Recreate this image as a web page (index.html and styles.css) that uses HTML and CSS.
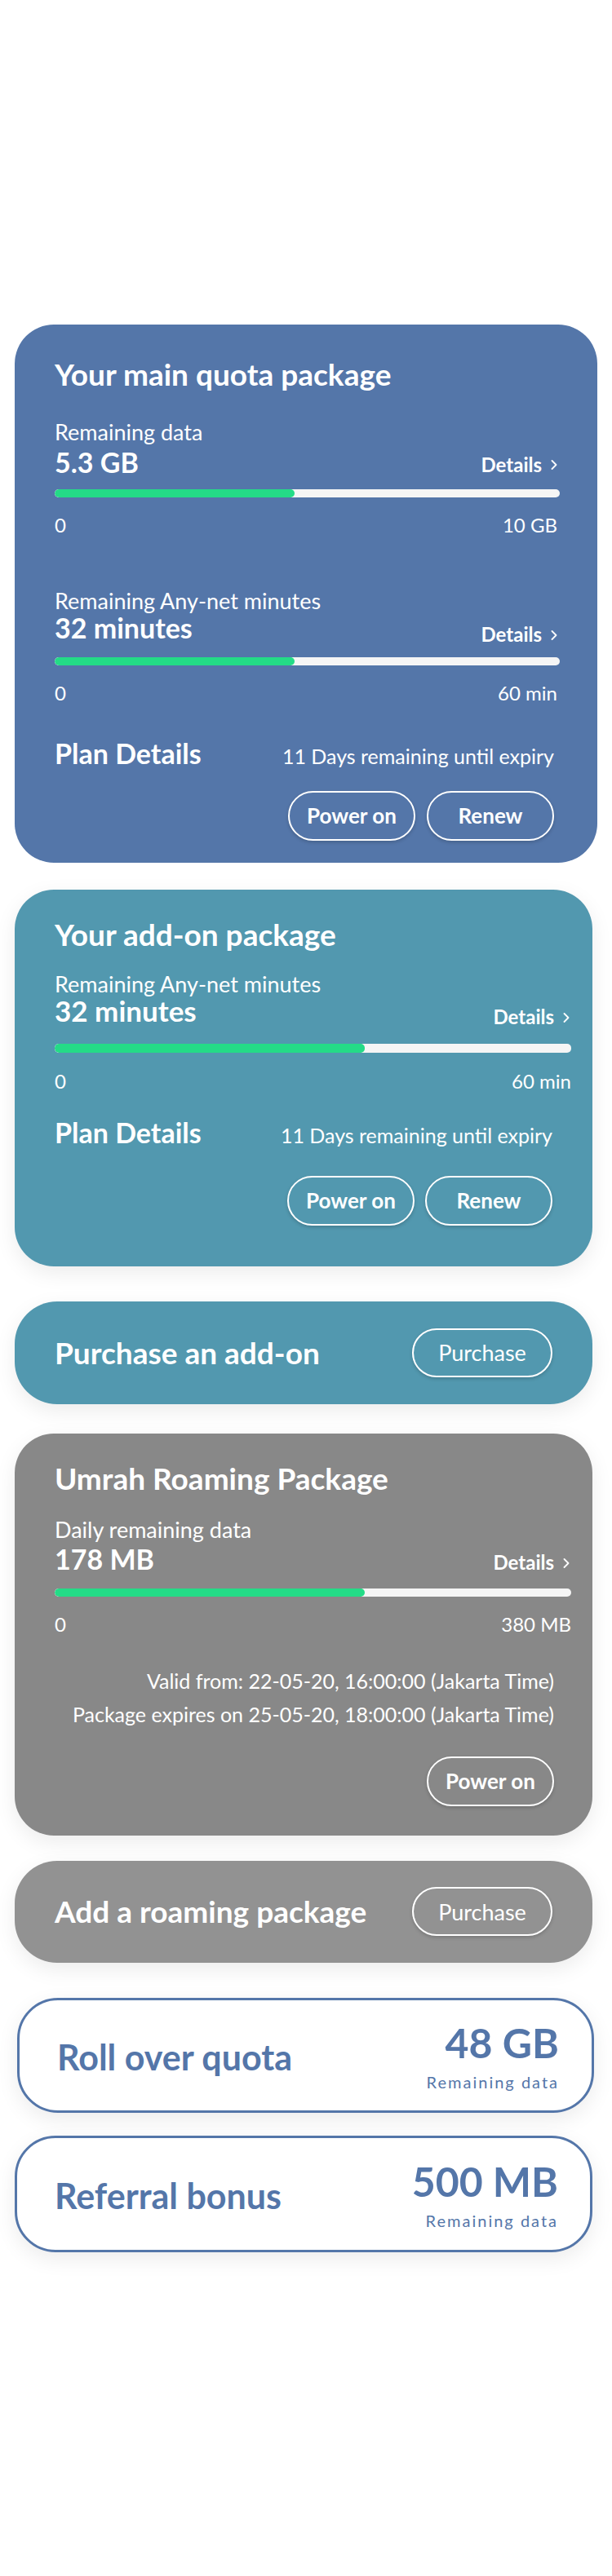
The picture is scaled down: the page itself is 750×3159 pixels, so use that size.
FILE: index.html
```html
<!DOCTYPE html>
<html lang="en">
<head>
<meta charset="utf-8">
<title>Quota</title>
<link rel="stylesheet" href="styles.css">
</head>
<body>
<main class="page">

  <section class="card card--main">
    <h2 class="card-title">Your main quota package</h2>
    <div class="usage usage--a">
      <div class="usage-label">Remaining data</div>
      <div class="usage-row">
        <div class="usage-value">5.3 GB</div>
        <a class="details">Details <svg class="chev" viewBox="0 0 8 12" width="8" height="12"><polyline points="1.5,1 6.5,6 1.5,11" fill="none" stroke="#fff" stroke-width="1.8" stroke-linecap="round" stroke-linejoin="round"/></svg></a>
      </div>
      <div class="bar"><div class="bar-fill" style="width:47.5%"></div></div>
      <div class="ticks"><span>0</span><span>10 GB</span></div>
    </div>
    <div class="usage usage--b">
      <div class="usage-label">Remaining Any-net minutes</div>
      <div class="usage-row">
        <div class="usage-value">32 minutes</div>
        <a class="details">Details <svg class="chev" viewBox="0 0 8 12" width="8" height="12"><polyline points="1.5,1 6.5,6 1.5,11" fill="none" stroke="#fff" stroke-width="1.8" stroke-linecap="round" stroke-linejoin="round"/></svg></a>
      </div>
      <div class="bar"><div class="bar-fill" style="width:47.5%"></div></div>
      <div class="ticks"><span>0</span><span>60 min</span></div>
    </div>
    <div class="plan-row">
      <span class="plan-title">Plan Details</span>
      <span class="plan-expiry">11 Days remaining until expiry</span>
    </div>
    <div class="actions">
      <button class="pill">Power on</button>
      <button class="pill">Renew</button>
    </div>
  </section>

  <section class="card card--addon">
    <h2 class="card-title">Your add-on package</h2>
    <div class="usage">
      <div class="usage-label">Remaining Any-net minutes</div>
      <div class="usage-row">
        <div class="usage-value">32 minutes</div>
        <a class="details">Details <svg class="chev" viewBox="0 0 8 12" width="8" height="12"><polyline points="1.5,1 6.5,6 1.5,11" fill="none" stroke="#fff" stroke-width="1.8" stroke-linecap="round" stroke-linejoin="round"/></svg></a>
      </div>
      <div class="bar"><div class="bar-fill" style="width:60%"></div></div>
      <div class="ticks"><span>0</span><span>60 min</span></div>
    </div>
    <div class="plan-row">
      <span class="plan-title">Plan Details</span>
      <span class="plan-expiry">11 Days remaining until expiry</span>
    </div>
    <div class="actions">
      <button class="pill">Power on</button>
      <button class="pill">Renew</button>
    </div>
  </section>

  <section class="strip strip--teal">
    <h2 class="strip-title">Purchase an add-on</h2>
    <button class="pill pill--buy">Purchase</button>
  </section>

  <section class="card card--roam">
    <h2 class="card-title">Umrah Roaming Package</h2>
    <div class="usage">
      <div class="usage-label">Daily remaining data</div>
      <div class="usage-row">
        <div class="usage-value">178 MB</div>
        <a class="details">Details <svg class="chev" viewBox="0 0 8 12" width="8" height="12"><polyline points="1.5,1 6.5,6 1.5,11" fill="none" stroke="#fff" stroke-width="1.8" stroke-linecap="round" stroke-linejoin="round"/></svg></a>
      </div>
      <div class="bar"><div class="bar-fill" style="width:60%"></div></div>
      <div class="ticks"><span>0</span><span>380 MB</span></div>
    </div>
    <div class="validity">
      <p>Valid from: 22-05-20, 16:00:00 (Jakarta Time)</p>
      <p>Package expires on 25-05-20, 18:00:00 (Jakarta Time)</p>
    </div>
    <div class="actions">
      <button class="pill">Power on</button>
    </div>
  </section>

  <section class="strip strip--grey">
    <h2 class="strip-title">Add a roaming package</h2>
    <button class="pill pill--buy">Purchase</button>
  </section>

  <section class="outline outline--roll">
    <h2 class="outline-title">Roll over quota</h2>
    <div class="outline-amount">
      <div class="amount-value">48 GB</div>
      <div class="amount-label">Remaining data</div>
    </div>
  </section>

  <section class="outline outline--ref">
    <h2 class="outline-title">Referral bonus</h2>
    <div class="outline-amount">
      <div class="amount-value">500 MB</div>
      <div class="amount-label">Remaining data</div>
    </div>
  </section>

</main>
</body>
</html>
```

FILE: styles.css
```css
* { box-sizing: border-box; }

html, body {
  margin: 0;
  padding: 0;
  background: #ffffff;
}

body {
  font-family: Lato, "Liberation Sans", sans-serif;
  color: #ffffff;
  line-height: 1.2;
}

.page {
  display: flex;
  flex-direction: column;
  align-items: flex-start;
  padding: 398px 0 395px 0;
}

h2, p { margin: 0; }

/* ---------- big cards ---------- */
.card {
  margin-left: 18px;
  width: 708px;
  border-radius: 48px;
  display: flex;
  flex-direction: column;
  box-shadow: 0 8px 26px rgba(0, 0, 0, 0.08);
}

.card-title {
  font-size: 37px;
  font-weight: 700;
  line-height: 1.2;
}

.usage-label {
  font-size: 27px;
  font-weight: 400;
  line-height: 1;
}

.usage-row {
  display: flex;
  justify-content: space-between;
  align-items: flex-end;
}

.usage-value {
  font-size: 34px;
  font-weight: 700;
  line-height: 1;
}

.details {
  font-size: 24px;
  font-weight: 700;
  line-height: 1.2;
  display: flex;
  align-items: center;
  gap: 11px;
  margin-bottom: 0;
}

.chev { display: block; }

.bar {
  height: 10px;
  border-radius: 5px;
  background: #f5f5f5;
  overflow: hidden;
}

.bar-fill {
  height: 100%;
  background: #24db87;
  border-radius: 5px;
}

.ticks {
  display: flex;
  justify-content: space-between;
  font-size: 24px;
  font-weight: 400;
  line-height: 1.2;
}

.plan-row {
  display: flex;
  justify-content: space-between;
  align-items: baseline;
}

.plan-title {
  font-size: 34px;
  font-weight: 700;
  line-height: 1.2;
}

.plan-expiry {
  font-size: 25px;
  font-weight: 400;
  line-height: 1.2;
}

.actions {
  display: flex;
  justify-content: flex-end;
  gap: 14px;
}

.pill {
  font-family: Lato, "Liberation Sans", sans-serif;
  color: #ffffff;
  background: transparent;
  border: 2px solid #ffffff;
  border-radius: 31px;
  width: 156px;
  height: 61px;
  font-size: 26px;
  font-weight: 700;
  padding: 0;
  box-shadow: 0 2px 4px rgba(0, 0, 0, 0.18);
}

.pill--buy {
  width: 172px;
  height: 60px;
  font-size: 27px;
  font-weight: 400;
}

/* main card */
.card--main {
  width: 714px;
  background: #5476a9;
  padding: 39px 46px 27px 49px;
  box-shadow: none;
}
.card--main .usage--a { margin-top: 35px; }
.card--main .usage--b { margin-top: 64px; }
.card--main .usage--a .usage-value { margin-top: 7px; }
.card--main .usage--b .usage-value { margin-top: 3px; }
.card--main .details { margin-right: 3px; }
.card--main .usage--b .details { margin-bottom: -6px; }
.card--main .usage--a .bar { margin-top: 16px; }
.card--main .usage--b .bar { margin-top: 19px; }
.card--main .ticks { margin-top: 20px; padding-right: 3px; }
.card--main .plan-row { margin-top: 39px; margin-right: 7px; }
.card--main .actions { margin-top: 25px; margin-right: 7px; }

/* add-on card */
.card--addon {
  margin-top: 33px;
  background: #5298af;
  padding: 33px 26px 50px 49px;
}
.card--addon .usage { margin-top: 25px; }
.card--addon .usage-value { font-size: 35px; margin-top: 2px; }
.card--addon .details { margin-bottom: -5px; margin-right: 2px; }
.card--addon .bar { margin-top: 23px; height: 11px; }
.card--addon .ticks { margin-top: 21px; }
.card--addon .plan-row { margin-top: 28px; margin-right: 23px; }
.card--addon .actions { margin-top: 32px; margin-right: 23px; gap: 13px; }

/* roaming card */
.card--roam {
  margin-top: 36px;
  background: #888888;
  padding: 33px 26px 36px 49px;
}
.card--roam .usage { margin-top: 27px; }
.card--roam .usage-value { margin-top: 6px; }
.card--roam .details { margin-right: 2px; margin-bottom: -2px; }
.card--roam .bar { margin-top: 19px; }
.card--roam .ticks { margin-top: 20px; }
.card--roam .validity {
  margin-top: 34px;
  margin-right: 21px;
  text-align: right;
  font-size: 25px;
  line-height: 41px;
}
.card--roam .actions { margin-top: 31px; margin-right: 21px; }

/* ---------- strips ---------- */
.strip {
  margin-left: 18px;
  width: 708px;
  height: 126px;
  border-radius: 52px;
  padding: 0 49px;
  display: flex;
  align-items: center;
  justify-content: space-between;
  box-shadow: 0 8px 26px rgba(0, 0, 0, 0.08);
}

.strip-title {
  font-size: 37px;
  font-weight: 700;
  line-height: 1.2;
}

.strip--teal {
  margin-top: 43px;
  background: #5298af;
}

.strip--grey {
  margin-top: 31px;
  height: 125px;
  background: #929292;
}

/* ---------- outlined cards ---------- */
.outline {
  margin-left: 18px;
  width: 708px;
  height: 143px;
  border: 3px solid #5476a9;
  border-radius: 50px;
  background: #ffffff;
  color: #5476a9;
  padding: 0 39px 0 46px;
  display: flex;
  align-items: center;
  justify-content: space-between;
  box-shadow: 0 8px 26px rgba(0, 0, 0, 0.08);
}

.outline--roll {
  margin-top: 43px;
  margin-left: 21px;
  width: 707px;
  height: 141px;
  padding: 0 40px 0 46px;
}

.outline--ref {
  margin-top: 28px;
}

.outline-title {
  font-size: 43px;
  font-weight: 700;
  line-height: 1.2;
  padding-top: 5px;
}

.outline-amount {
  text-align: right;
}

.amount-value {
  font-size: 50px;
  font-weight: 700;
  line-height: 1.2;
}

.amount-label {
  margin-top: 6px;
  font-size: 20px;
  font-weight: 400;
  line-height: 1.2;
  letter-spacing: 2px;
}
```
